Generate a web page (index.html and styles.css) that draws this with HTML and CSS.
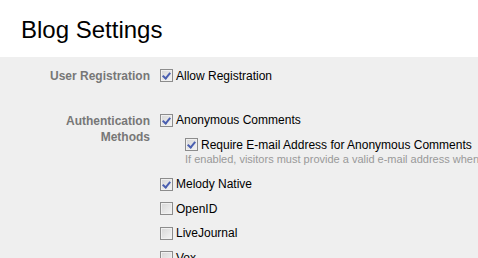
FILE: index.html
```html
<!DOCTYPE html>
<html lang="en">
<head>
    <meta charset="UTF-8">
    <title>Blog Settings</title>
    <link rel="stylesheet" href="styles.css">
</head>
<body>
    <h1 class="page-title">Blog Settings</h1>

    <div class="settings">
        <div class="field">
            <div class="field-label">User Registration</div>
            <div class="field-content">
                <label class="opt"><span class="cb checked"></span>Allow Registration</label>
            </div>
        </div>

        <div class="field auth">
            <div class="field-label">Authentication Methods</div>
            <div class="field-content">
                <label class="opt"><span class="cb checked"></span>Anonymous Comments</label>
                <div class="sub">
                    <label class="opt"><span class="cb checked"></span>Require E-mail Address for Anonymous Comments</label>
                    <p class="hint">If enabled, visitors must provide a valid e-mail address when commenting.</p>
                </div>
                <label class="opt"><span class="cb checked"></span>Melody Native</label>
                <label class="opt"><span class="cb"></span>OpenID</label>
                <label class="opt"><span class="cb"></span>LiveJournal</label>
                <label class="opt"><span class="cb"></span>Vox</label>
            </div>
        </div>
    </div>
</body>
</html>
```

FILE: styles.css
```css
body {
    margin: 0;
    background: #fff;
    font-family: "Liberation Sans", Arial, sans-serif;
    overflow: hidden;
}
.page-title {
    margin: 0;
    height: 57px;
    padding: 16px 0 0 21px;
    box-sizing: border-box;
    font-size: 24px;
    font-weight: normal;
    line-height: 28px;
    color: #000;
}
.settings {
    background: #efefef;
    padding: 10px 0 0 46px;
    min-height: 300px;
}
.field {
    display: grid;
    grid-template-columns: 104px 1fr;
    column-gap: 10px;
}
.field.auth { margin-top: 20px; }
.field-label {
    text-align: right;
    font-size: 12px;
    font-weight: bold;
    color: #777;
    line-height: 16px;
    padding-top: 1px;
}
.field-content {
    display: flex;
    flex-direction: column;
    white-space: nowrap;
}
.opt {
    display: flex;
    align-items: center;
    font-size: 12px;
    color: #000;
    height: 17px;
    margin-bottom: 7.5px;
}
.sub { padding-left: 25px; margin-bottom: 9.5px; }
.sub .opt { margin-bottom: 0; }
.hint {
    margin: 0;
    font-size: 11px;
    color: #999;
    line-height: 13px;
}
.cb {
    width: 11px;
    height: 11px;
    border: 1px solid #8c8c8c;
    background: linear-gradient(135deg, #d6d6d6, #f4f4f4);
    box-shadow: inset 0 0 0 1px #f0f0f0;
    margin-right: 3px;
    flex: none;
    position: relative;
}
.cb.checked::after {
    content: "";
    position: absolute;
    left: 3px;
    top: 1px;
    width: 3px;
    height: 6px;
    border: solid #4a5fb0;
    border-width: 0 2px 2px 0;
    transform: rotate(40deg);
}
```
